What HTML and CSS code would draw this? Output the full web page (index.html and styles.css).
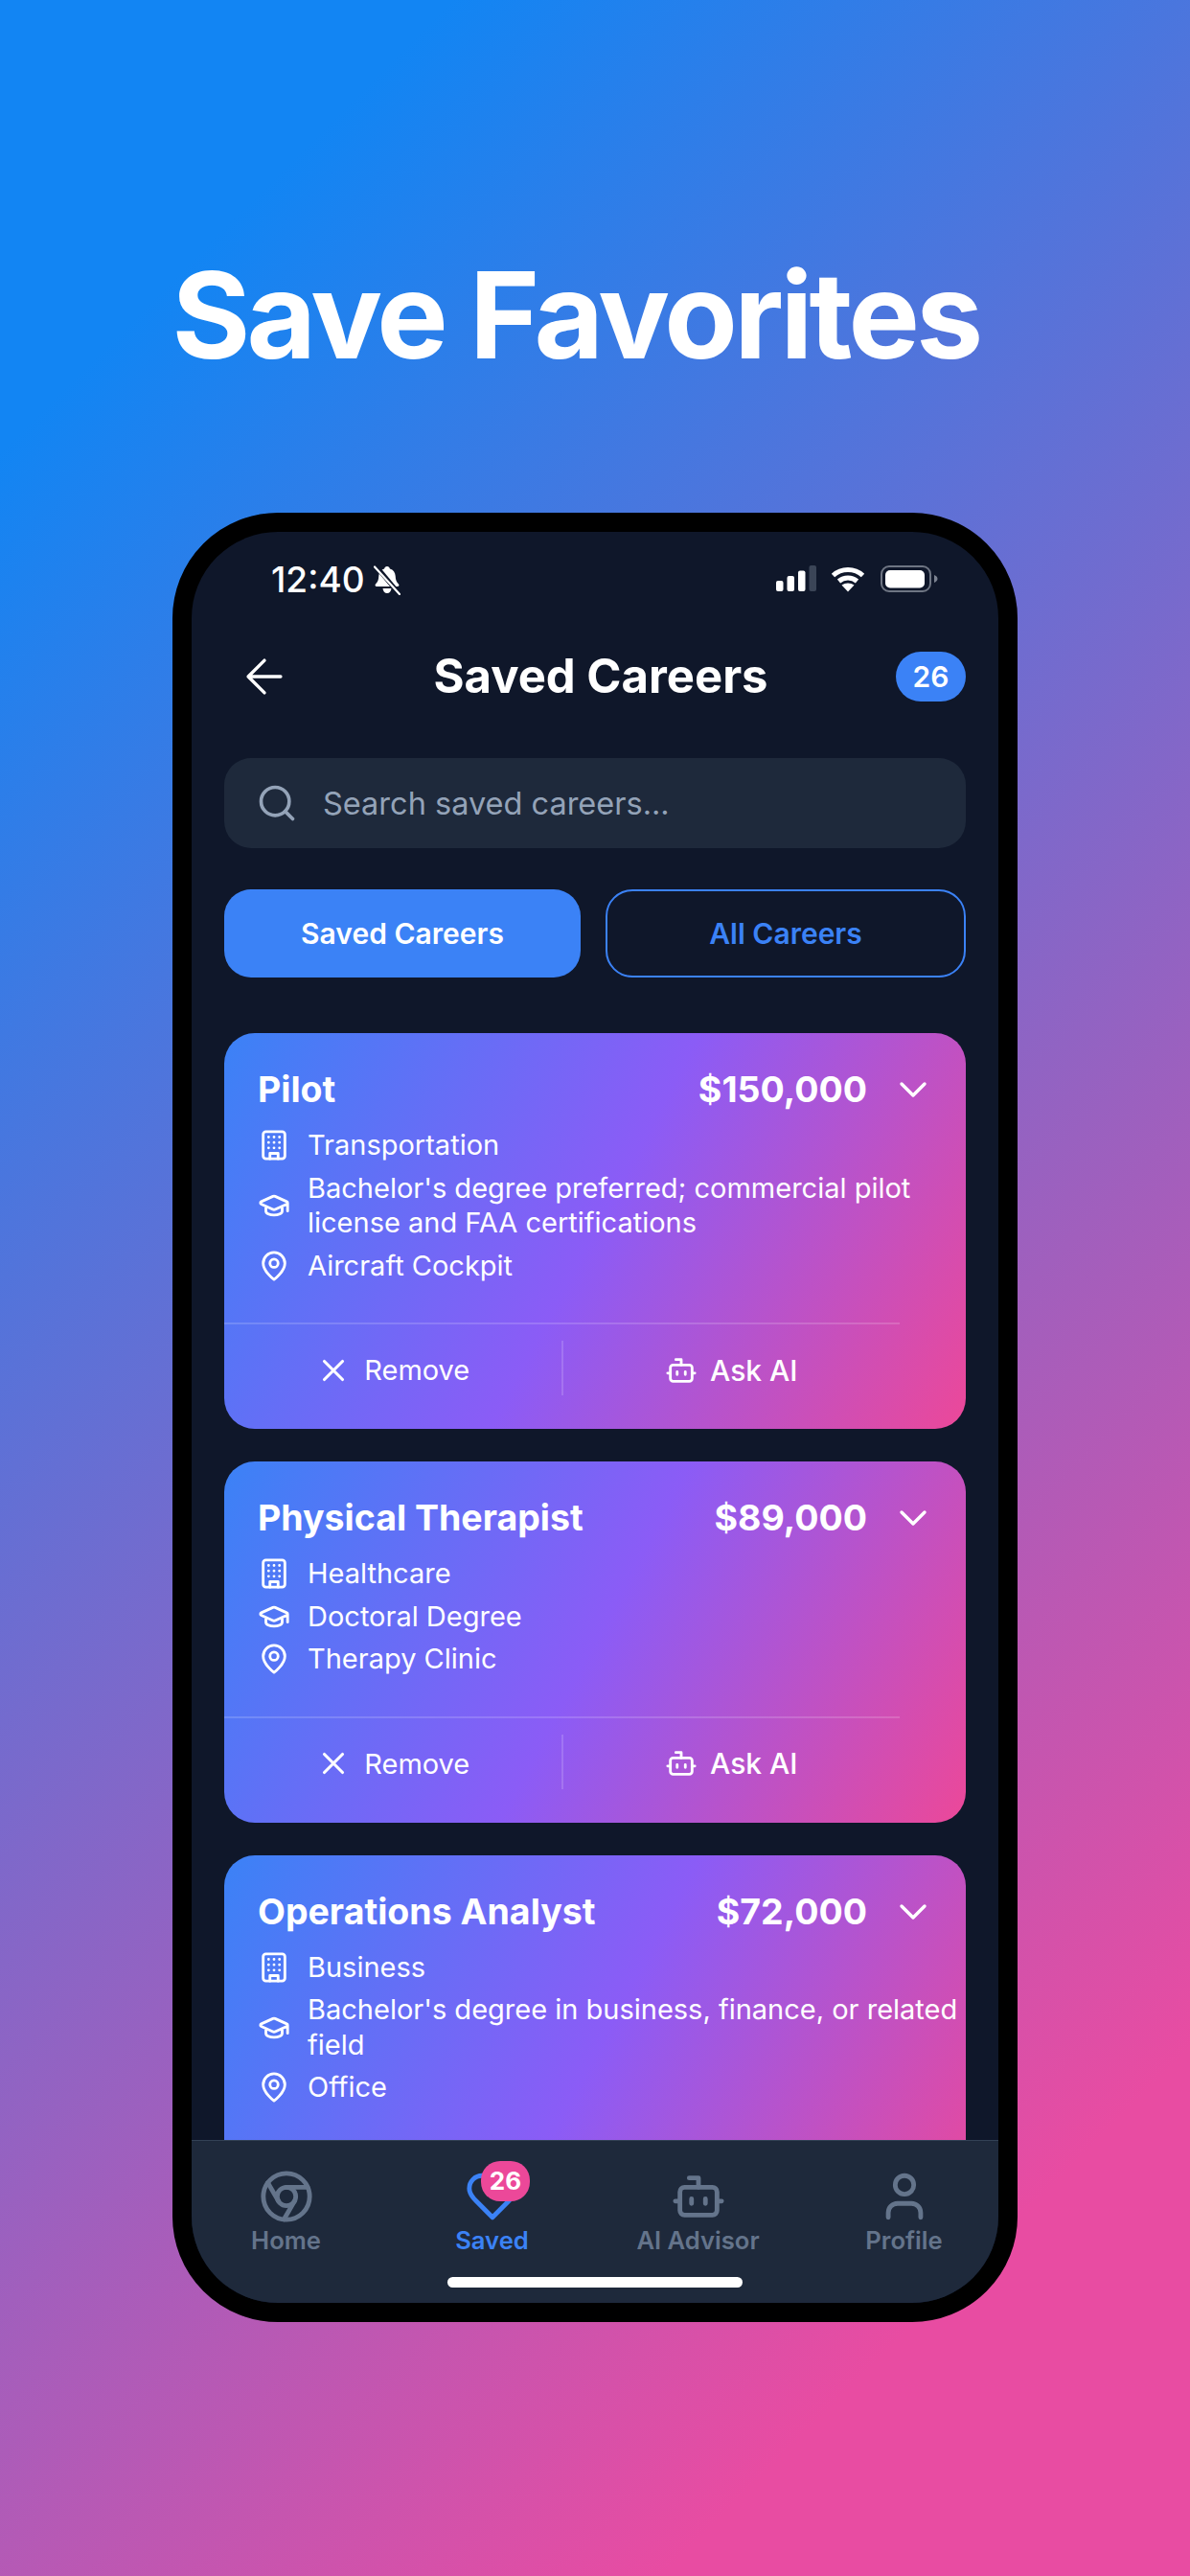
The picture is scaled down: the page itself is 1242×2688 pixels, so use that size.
FILE: index.html
```html
<!DOCTYPE html>
<html lang="en">
<head>
<meta charset="utf-8">
<title>Save Favorites</title>
<link rel="stylesheet" href="styles.css">
</head>
<body>
<svg class="sprite" aria-hidden="true">
  <symbol id="i-building" viewBox="0 0 24 24"><rect x="4" y="2" width="16" height="20" rx="2"/><path d="M9 22v-4h6v4M8 6h.01M16 6h.01M12 6h.01M12 10h.01M12 14h.01M16 10h.01M16 14h.01M8 10h.01M8 14h.01"/></symbol>
  <symbol id="i-cap" viewBox="0 0 24 24"><path d="M21.420 10.920a1 1 0 0 0-.02-1.840L12.830 5.180a2 2 0 0 0-1.660 0L2.600 9.080a1 1 0 0 0 0 1.830l8.570 3.910a2 2 0 0 0 1.660 0zM22 10v6M6 12.500V16a6 3 0 0 0 12 0v-3.500"/></symbol>
  <symbol id="i-pin" viewBox="0 0 24 24"><path d="M20 10c0 6-8 12-8 12s-8-6-8-12a8 8 0 0 1 16 0Z"/><circle cx="12" cy="10" r="3"/></symbol>
  <symbol id="i-x" viewBox="0 0 24 24"><path d="M18 6 6 18M6 6l12 12"/></symbol>
  <symbol id="i-bot" viewBox="0 0 24 24"><path d="M12 8V4H8"/><rect x="4" y="8" width="16" height="12" rx="2"/><path d="M2 14h2M20 14h2M15 13v2M9 13v2"/></symbol>
  <symbol id="i-chev" viewBox="0 0 24 24"><path d="m6 9 6 6 6-6"/></symbol>
</svg>
<h1 class="hero">Save Favorites</h1>
<div class="phone">
  <div class="status">
    <div class="status-left">
      <span class="time">12:40</span>
      <svg class="bell" viewBox="0 0 28 31"><path class="fill-w" d="M14 1c1.600 0 2.600 1 2.900 2.400 3.600 1 5.600 4 5.800 7.700.2 3.800 1 6.400 3.300 8.500.9 1 .4 2.400-1 2.400H3c-1.400 0-1.900-1.400-1-2.400 2.300-2.100 3.100-4.700 3.300-8.500.2-3.700 2.200-6.700 5.800-7.700C11.400 2 12.400 1 14 1Z"/><path class="fill-w" d="M9.500 24h9c-.3 3-2.100 5-4.500 5s-4.200-2-4.500-5Z"/><path class="slash-d" d="M3 1.500 26 29"/><path class="slash-w" d="M1 1.500 27 30"/></svg>
    </div>
    <div class="status-right">
      <svg class="signal" viewBox="0 0 42 28"><rect class="fill-w" x="0" y="16" width="7.500" height="11" rx="2"/><rect class="fill-w" x="11.500" y="11" width="7.500" height="16" rx="2"/><rect class="fill-w" x="23" y="5.500" width="7.500" height="21.500" rx="2"/><rect class="fill-g" x="34.500" y="0" width="7.500" height="27" rx="2"/></svg>
      <svg class="wifi" viewBox="0 0 36 27"><path class="arc" d="M2.500 9.500C11 1.500 25 1.500 33.500 9.500"/><path class="arc" d="M8.500 15.500c5.500-4.700 13.500-4.700 19 0"/><path class="fill-w" d="M18 26.500 11.500 19.500c3.800-2.800 9.200-2.800 13 0Z"/></svg>
      <svg class="battery" viewBox="0 0 60 28"><rect class="batt-line" x="1" y="1" width="51" height="26" rx="8"/><rect class="fill-w" x="5" y="5" width="41" height="18.500" rx="5"/><path class="fill-n" d="M56 10c2 .8 3.500 2.200 3.500 4s-1.500 3.200-3.500 4Z"/></svg>
    </div>
  </div>

  <header class="topbar">
    <svg class="back" viewBox="0 0 24 24"><path d="m12 19-7-7 7-7M19 12H5"/></svg>
    <div class="top-title">Saved Careers</div>
    <div class="count">26</div>
  </header>

  <div class="search">
    <svg class="search-icon" viewBox="0 0 24 24"><circle cx="11" cy="11" r="8"/><path d="m21 21-4.300-4.300"/></svg>
    <span>Search saved careers...</span>
  </div>

  <div class="tabs">
    <div class="tab tab-on">Saved Careers</div>
    <div class="tab tab-off">All Careers</div>
  </div>

  <main class="list">
    <article class="card">
      <div class="card-head">
        <div class="job">Pilot</div>
        <div class="pay">$150,000</div>
        <svg class="ico chev"><use href="#i-chev"/></svg>
      </div>
      <div class="rows">
        <div class="row"><svg class="ico row-ico"><use href="#i-building"/></svg><span class="row-text">Transportation</span></div>
        <div class="row"><svg class="ico row-ico"><use href="#i-cap"/></svg><span class="row-text">Bachelor's degree preferred; commercial pilot license and FAA certifications</span></div>
        <div class="row"><svg class="ico row-ico"><use href="#i-pin"/></svg><span class="row-text">Aircraft Cockpit</span></div>
      </div>
      <div class="actions">
        <div class="action"><svg class="ico x-ico"><use href="#i-x"/></svg><span class="remove">Remove</span></div>
        <div class="action action-r"><svg class="ico row-ico"><use href="#i-bot"/></svg>Ask AI</div>
      </div>
    </article>

    <article class="card">
      <div class="card-head">
        <div class="job">Physical Therapist</div>
        <div class="pay">$89,000</div>
        <svg class="ico chev"><use href="#i-chev"/></svg>
      </div>
      <div class="rows">
        <div class="row"><svg class="ico row-ico"><use href="#i-building"/></svg><span class="row-text">Healthcare</span></div>
        <div class="row"><svg class="ico row-ico"><use href="#i-cap"/></svg><span class="row-text">Doctoral Degree</span></div>
        <div class="row"><svg class="ico row-ico"><use href="#i-pin"/></svg><span class="row-text">Therapy Clinic</span></div>
      </div>
      <div class="actions">
        <div class="action"><svg class="ico x-ico"><use href="#i-x"/></svg><span class="remove">Remove</span></div>
        <div class="action action-r"><svg class="ico row-ico"><use href="#i-bot"/></svg>Ask AI</div>
      </div>
    </article>

    <article class="card card-cut">
      <div class="card-head">
        <div class="job">Operations Analyst</div>
        <div class="pay">$72,000</div>
        <svg class="ico chev"><use href="#i-chev"/></svg>
      </div>
      <div class="rows">
        <div class="row"><svg class="ico row-ico"><use href="#i-building"/></svg><span class="row-text">Business</span></div>
        <div class="row"><svg class="ico row-ico"><use href="#i-cap"/></svg><span class="row-text">Bachelor's degree in business, finance, or related field</span></div>
        <div class="row"><svg class="ico row-ico"><use href="#i-pin"/></svg><span class="row-text">Office</span></div>
      </div>
    </article>
  </main>

  <nav class="nav">
    <div class="nav-item">
      <svg class="nav-ico" viewBox="0 0 24 24"><circle cx="12" cy="12" r="10"/><circle cx="12" cy="12" r="4"/><path d="M21.170 8H12M3.950 6.060 8.540 14M10.880 21.940 15.460 14"/></svg>
      <span>Home</span>
    </div>
    <div class="nav-item nav-active">
      <svg class="nav-ico" viewBox="0 0 24 24"><path d="M19 14c1.490-1.460 3-3.210 3-5.500A5.500 5.500 0 0 0 16.500 3c-1.760 0-3 .5-4.500 2-1.500-1.500-2.740-2-4.500-2A5.500 5.500 0 0 0 2 8.500c0 2.300 1.500 4.050 3 5.500l7 7Z"/></svg>
      <span>Saved</span>
      <div class="nav-badge">26</div>
    </div>
    <div class="nav-item">
      <svg class="nav-ico" viewBox="0 0 24 24"><path d="M12 8V4H8"/><rect x="4" y="8" width="16" height="12" rx="2"/><path d="M2 14h2M20 14h2M15 13v2M9 13v2"/></svg>
      <span>AI Advisor</span>
    </div>
    <div class="nav-item">
      <svg class="nav-ico" viewBox="0 0 24 24"><path d="M19 21v-2a4 4 0 0 0-4-4H9a4 4 0 0 0-4 4v2"/><circle cx="12" cy="7" r="4"/></svg>
      <span>Profile</span>
    </div>
    <div class="home-bar"></div>
  </nav>
</div>
</body>
</html>
```

FILE: styles.css
```css
* { box-sizing: border-box; }
html, body { margin: 0; padding: 0; }
body {
  width: 1242px;
  height: 2688px;
  overflow: hidden;
  display: flex;
  flex-direction: column;
  align-items: center;
  font-family: Inter, "Liberation Sans", sans-serif;
  background: linear-gradient(135deg, #1285f3 12%, #e84ca2 86%);
  color: #fff;
}
.sprite { display: none; }
.hero {
  margin: 0;
  padding: 258px 40px 0 0;
  height: 535px;
  font-size: 125px;
  letter-spacing: -3.700px;
  line-height: 142px;
  font-weight: 700;
  color: #fff;
}
.phone {
  width: 882px;
  height: 1888px;
  border: 20px solid #000;
  border-radius: 110px;
  background: #0f172a;
  overflow: hidden;
  display: flex;
  flex-direction: column;
  flex: none;
}
.status {
  height: 109px;
  flex: none;
  display: flex;
  justify-content: space-between;
  align-items: flex-start;
  padding: 34px 69px 0 83px;
}
.status-left, .status-right { display: flex; align-items: center; }
.status-left { gap: 9px; }
.status-right { padding-top: 1px; }
.time { font-size: 37px; line-height: 32px; font-weight: 500; }
.bell { width: 28px; height: 31px; }
.signal { width: 42px; height: 28px; margin-right: 15px; }
.wifi { width: 36px; height: 27px; margin-right: 16px; }
.battery { width: 60px; height: 28px; margin-right: -6px; }
.fill-w { fill: #fff; }
.fill-g { fill: #3b4557; }
.fill-n { fill: #7b8290; }
.slash-d { stroke: #0f172a; stroke-width: 5; fill: none; }
.slash-w { stroke: #fff; stroke-width: 2.200; fill: none; stroke-linecap: round; }
.arc { stroke: #fff; stroke-width: 5; fill: none; }
.batt-line { fill: none; stroke: #6e7583; stroke-width: 2; }

.topbar {
  height: 84px;
  flex: none;
  display: flex;
  align-items: center;
  padding: 0 34px 0 47px;
}
.back {
  width: 58px;
  height: 58px;
  flex: none;
  fill: none;
  stroke: #fff;
  stroke-width: 1.400;
  stroke-linecap: round;
  stroke-linejoin: round;
}
.top-title {
  flex: 1;
  text-align: center;
  padding-left: 14px;
  font-size: 49px;
  font-weight: 700;
  line-height: 58px;
}
.count {
  width: 73px;
  height: 52px;
  border-radius: 26px;
  background: #3b82f6;
  display: flex;
  align-items: center;
  justify-content: center;
  font-size: 30px;
  font-weight: 600;
}
.search {
  margin: 43px 34px 0;
  height: 94px;
  flex: none;
  border-radius: 28px;
  background: #1e293b;
  display: flex;
  align-items: center;
  gap: 26px;
  padding-left: 33px;
  color: #94a3b8;
  font-size: 32.500px;
}
.search-icon {
  width: 44px;
  height: 44px;
  fill: none;
  stroke: #94a3b8;
  stroke-width: 2;
  stroke-linecap: round;
  stroke-linejoin: round;
}
.tabs {
  margin: 43px 34px 0;
  display: flex;
  gap: 26px;
  flex: none;
}
.tab {
  flex: 1;
  height: 92px;
  border-radius: 28px;
  display: flex;
  align-items: center;
  justify-content: center;
  font-size: 30px;
  font-weight: 600;
}
.tab-on { background: #3b82f6; color: #fff; }
.tab-off { border: 2px solid #3b82f6; color: #3b82f6; }

.list {
  flex: 1;
  min-height: 0;
  overflow: hidden;
  margin-top: 58px;
  padding: 0 34px;
  display: flex;
  flex-direction: column;
  gap: 34px;
}
.card {
  flex: none;
  border-radius: 32px;
  padding: 35px 0 35px 35px;
  background: linear-gradient(118deg, #3b82f6 0%, #8b5cf6 50%, #ec4899 100%);
}
.card-cut { height: 414px; }
.card-head {
  display: flex;
  align-items: center;
  height: 48px;
  padding-right: 31px;
}
.job { flex: 1; font-size: 37.500px; font-weight: 700; line-height: 48px; }
.pay { font-size: 37.500px; font-weight: 700; line-height: 48px; margin-right: 24px; }
.ico {
  fill: none;
  stroke: #fff;
  stroke-width: 2;
  stroke-linecap: round;
  stroke-linejoin: round;
  flex: none;
}
.chev { width: 48px; height: 48px; stroke-width: 1.700; }
.rows {
  margin-top: 16px;
  display: flex;
  flex-direction: column;
  gap: 8px;
}
.row { display: flex; align-items: center; gap: 18px; }
.row-ico { width: 34px; height: 34px; }
.row-text { width: 684px; font-size: 29px; line-height: 36.500px; }
.actions {
  margin: 41px 0 0 -35px;
  width: 705px;
  border-top: 2px solid rgba(255, 255, 255, 0.16);
  padding-top: 17px;
  display: flex;
}
.action {
  flex: 1;
  height: 57px;
  display: flex;
  align-items: center;
  justify-content: center;
  gap: 13px;
  font-size: 30px;
  font-weight: 500;
  padding-top: 4px;
}
.remove { font-weight: 400; font-size: 29px; }
.action-r { border-left: 2px solid rgba(255, 255, 255, 0.16); }
.x-ico { width: 38px; height: 38px; }

.nav {
  position: relative;
  height: 170px;
  flex: none;
  background: #1e293b;
  border-top: 1px solid #334155;
  display: grid;
  grid-template-columns: repeat(4, 215px);
  justify-content: center;
  align-items: start;
  padding-top: 29px;
}
.nav-item {
  position: relative;
  display: flex;
  flex-direction: column;
  align-items: center;
  color: #64748b;
  font-size: 25.600px;
  font-weight: 600;
  line-height: 34px;
}
.nav-ico {
  width: 58px;
  height: 58px;
  fill: none;
  stroke: currentColor;
  stroke-width: 2;
  stroke-linecap: round;
  stroke-linejoin: round;
}
.nav-active { color: #3b82f6; }
.nav-badge {
  position: absolute;
  top: -8px;
  left: 96px;
  width: 51px;
  height: 42px;
  border-radius: 20px;
  background: #ec4899;
  color: #fff;
  display: flex;
  align-items: center;
  justify-content: center;
  font-size: 26px;
  font-weight: 700;
}
.home-bar {
  position: absolute;
  left: 267px;
  bottom: 16px;
  width: 308px;
  height: 11px;
  border-radius: 6px;
  background: #fff;
}
```
